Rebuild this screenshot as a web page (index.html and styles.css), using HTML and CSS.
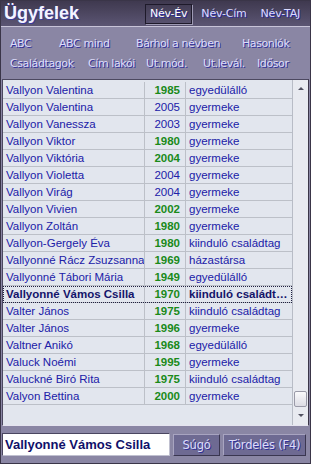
FILE: index.html
```html
<!DOCTYPE html>
<html lang="hu">
<head>
<meta charset="utf-8">
<link rel="stylesheet" href="styles.css">
</head>
<body>
<div class="win">
  <header class="titlebar">
    <h1 class="title">Ügyfelek</h1>
    <nav class="tabs">
      <span class="tab active">Név-Év</span>
      <span class="tab">Név-Cím</span>
      <span class="tab">Név-TAJ</span>
    </nav>
  </header>
  <div class="menu">
    <div class="mrow r1">
      <span>ABC</span><span>ABC mind</span><span>Bárhol a névben</span><span>Hasonlók</span>
    </div>
    <div class="mrow r2">
      <span>Családtagok</span><span>Cím lakói</span><span>Ut.mód.</span><span>Ut.levál.</span><span>Idősor</span>
    </div>
  </div>
  <div class="listwrap">
    <div class="list">
      <div class="row"><span class="c1">Vallyon Valentina</span><span class="c2 g">1985</span><span class="c3">egyedülálló</span></div>
      <div class="row"><span class="c1">Vallyon Valentina</span><span class="c2">2005</span><span class="c3">gyermeke</span></div>
      <div class="row"><span class="c1">Vallyon Vanessza</span><span class="c2">2003</span><span class="c3">gyermeke</span></div>
      <div class="row"><span class="c1">Vallyon Viktor</span><span class="c2 g">1980</span><span class="c3">gyermeke</span></div>
      <div class="row"><span class="c1">Vallyon Viktória</span><span class="c2 g">2004</span><span class="c3">gyermeke</span></div>
      <div class="row"><span class="c1">Vallyon Violetta</span><span class="c2">2004</span><span class="c3">gyermeke</span></div>
      <div class="row"><span class="c1">Vallyon Virág</span><span class="c2">2004</span><span class="c3">gyermeke</span></div>
      <div class="row"><span class="c1">Vallyon Vivien</span><span class="c2 g">2002</span><span class="c3">gyermeke</span></div>
      <div class="row"><span class="c1">Vallyon Zoltán</span><span class="c2 g">1980</span><span class="c3">gyermeke</span></div>
      <div class="row"><span class="c1">Vallyon-Gergely Éva</span><span class="c2 g">1980</span><span class="c3">kiinduló családtag</span></div>
      <div class="row"><span class="c1">Vallyonné Rácz Zsuzsanna</span><span class="c2 g">1969</span><span class="c3">házastársa</span></div>
      <div class="row"><span class="c1">Vallyonné Tábori Mária</span><span class="c2 g">1949</span><span class="c3">egyedülálló</span></div>
      <div class="row sel"><span class="c1">Vallyonné Vámos Csilla</span><span class="c2 g">1970</span><span class="c3">kiinduló családtag</span></div>
      <div class="row"><span class="c1">Valter János</span><span class="c2 g">1975</span><span class="c3">kiinduló családtag</span></div>
      <div class="row"><span class="c1">Valter János</span><span class="c2 g">1996</span><span class="c3">gyermeke</span></div>
      <div class="row"><span class="c1">Valtner Anikó</span><span class="c2 g">1968</span><span class="c3">egyedülálló</span></div>
      <div class="row"><span class="c1">Valuck Noémi</span><span class="c2 g">1995</span><span class="c3">gyermeke</span></div>
      <div class="row"><span class="c1">Valuckné Biró Rita</span><span class="c2 g">1975</span><span class="c3">kiinduló családtag</span></div>
      <div class="row"><span class="c1">Valyon Bettina</span><span class="c2 g">2000</span><span class="c3">gyermeke</span></div>
    </div>
    <div class="scroll">
      <span class="arrow up"></span>
      <span class="track"></span>
      <span class="thumb"></span>
      <span class="arrow down"></span>
    </div>
  </div>
  <footer class="bottom">
    <div class="input">Vallyonné Vámos Csilla</div>
    <span class="btn sugo">Súgó</span>
    <span class="btn tord">Tördelés (F4)</span>
  </footer>
</div>
</body>
</html>
```
FILE: styles.css
```css
html, body { margin: 0; padding: 0; }
body {
  width: 311px;
  height: 464px;
  overflow: hidden;
  font-family: "Liberation Sans", sans-serif;
  background: #8a86a4;
}
.win {
  width: 311px;
  height: 464px;
  box-sizing: border-box;
  border: 1px solid #3a3548;
  display: flex;
  flex-direction: column;
  background: #8a86a4;
}
.titlebar {
  height: 25px;
  display: flex;
  align-items: center;
  justify-content: space-between;
  background: linear-gradient(#3f394f, #5b5573);
  border-bottom: 1px solid #c8c4d8;
  padding: 0 5px 0 3px;
}
.title {
  margin: 0;
  font-family: "Liberation Sans", sans-serif;
  font-weight: bold;
  font-size: 18px;
  color: #f4f4ff;
  text-shadow: 1px 1px 0 #3a3aa0;
}
.tabs { display: flex; gap: 4px; align-items: center; }
.tab {
  font-family: "DejaVu Sans", sans-serif;
  font-size: 11px;
  letter-spacing: -0.2px;
  color: #dcdcff;
  text-shadow: 1px 1px 0 #2828a0;
  padding: 2px 4px 3px;
  border: 1px solid transparent;
}
.tab.active {
  border: 1px solid #1e1a2a;
  box-shadow: 1px 1px 0 #9e9ab4;
  color: #ffffff;
}
.menu {
  height: 52px;
  box-sizing: border-box;
  padding: 9px 0 0 9px;
}
.mrow {
  display: flex;
  font-family: "DejaVu Sans", sans-serif;
  font-size: 11px;
  letter-spacing: -0.4px;
  color: #dcdcfa;
  text-shadow: 1px 1px 0 #30309a;
  height: 20px;
  line-height: 16px;
}
.mrow span { flex: none; white-space: nowrap; }
.r1 span:nth-child(1) { width: 49px; }
.r1 span:nth-child(2) { width: 77px; }
.r1 span:nth-child(3) { width: 106px; }
.r2 span:nth-child(1) { width: 78px; }
.r2 span:nth-child(2) { width: 58px; }
.r2 span:nth-child(3) { width: 57px; }
.r2 span:nth-child(4) { width: 54px; }
.listwrap {
  margin: 0 1px 0 1px;
  height: 345px;
  display: flex;
  border-top: 1px solid #4c4860;
  border-left: 1px solid #4c4860;
  border-bottom: 1px solid #e6e4f0;
  border-right: 1px solid #3a3548;
  background: #e2e6ee;
}
.list {
  width: 289px;
  padding-top: 2px;
  border-right: 1px solid #b8bcc6;
}
.row {
  height: 16px;
  border-bottom: 1px solid #bcc0c8;
  display: flex;
  font-family: "Liberation Sans", sans-serif;
  font-size: 11.5px;
  line-height: 16px;
  color: #2020a8;
}
.c1 {
  width: 138px;
  padding-left: 3px;
  border-right: 1px solid #bcc0c8;
  white-space: nowrap;
  overflow: hidden;
}
.c2 {
  width: 35px;
  padding-right: 5px;
  text-align: right;
  border-right: 1px solid #bcc0c8;
}
.c2.g { color: #1a8a1a; font-weight: bold; }
.c3 {
  flex: 1;
  padding-left: 3px;
  white-space: nowrap;
  overflow: hidden;
  text-overflow: ellipsis;
}
.row.sel {
  outline: 1px dotted #202040;
  outline-offset: -1px;
  font-weight: bold;
  color: #14146a;
}
.row.sel .c3 { padding-right: 4px; }
.scroll {
  flex: 1;
  display: flex;
  flex-direction: column;
  align-items: stretch;
  background: #e8eaf0;
}
.arrow { height: 18px; position: relative; }
.arrow::after {
  content: "";
  position: absolute;
  left: 5px;
  top: 7px;
  border-left: 3px solid transparent;
  border-right: 3px solid transparent;
}
.up::after { border-bottom: 3px solid #505060; }
.down::after { border-top: 3px solid #505060; }
.track { flex: 1; }
.thumb {
  height: 14px;
  margin: 0 1px;
  border: 1px solid #9a9aa8;
  border-radius: 2px;
  background: linear-gradient(#fafafc, #dcdce4);
}
.bottom {
  flex: 1;
  display: flex;
  align-items: center;
  padding: 0 4px 0 1px;
  gap: 3px;
}
.input {
  width: 164px;
  height: 21px;
  background: #ffffff;
  border: 1px solid #c0c0d0;
  border-top-color: #4a4660;
  border-left-color: #4a4660;
  font-family: "Liberation Sans", sans-serif;
  font-weight: bold;
  font-size: 13px;
  line-height: 21px;
  padding-left: 2px;
  color: #10106a;
  white-space: nowrap;
  overflow: hidden;
}
.btn {
  height: 20px;
  line-height: 20px;
  background: #6e6a92;
  border: 1px solid #3a3650;
  border-top-color: #a8a4c0;
  border-left-color: #a8a4c0;
  font-family: "DejaVu Sans", sans-serif;
  font-size: 11.5px;
  letter-spacing: -0.2px;
  color: #dcdcfa;
  text-shadow: 1px 1px 0 #30309a;
  text-align: center;
}
.sugo { width: 45px; }
.tord { width: 81px; }
```
